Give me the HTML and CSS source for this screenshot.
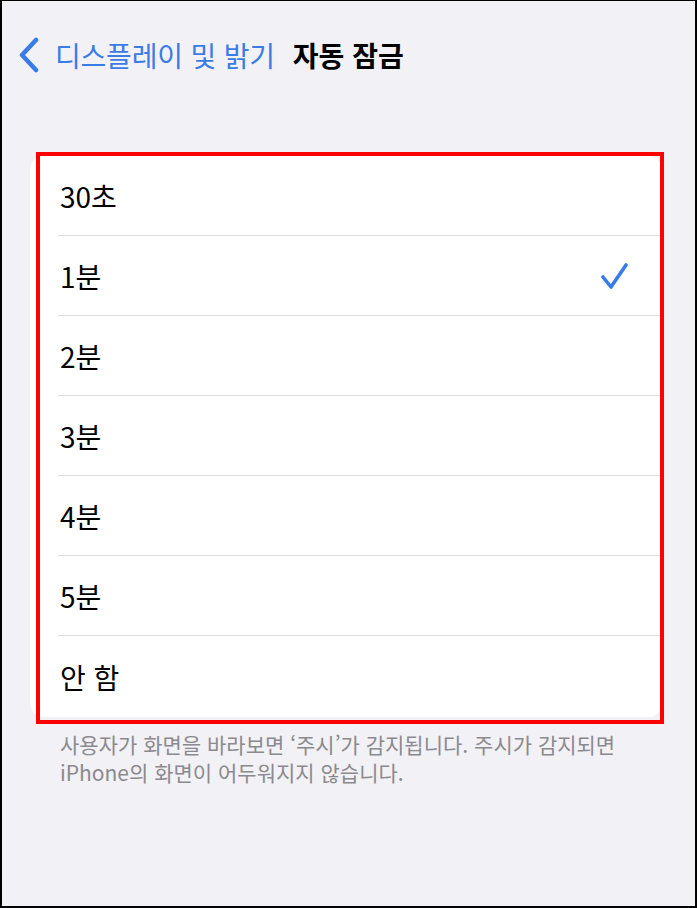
FILE: index.html
```html
<!DOCTYPE html>
<html lang="ko">
<head>
<meta charset="utf-8">
<title>자동 잠금</title>
<link rel="stylesheet" href="styles.css">
</head>
<body>
<div class="screen">
  <header class="nav">
    <svg class="chev" width="22" height="36" viewBox="0 0 22 36" aria-hidden="true">
      <path d="M18 3 L4 18 L18 33" fill="none" stroke="#3a7ce6" stroke-width="4.5" stroke-linecap="round" stroke-linejoin="round"/>
    </svg>
    <span class="back">디스플레이 및 밝기</span>
    <span class="title">자동 잠금</span>
  </header>

  <section class="card">
    <div class="row"><span>30초</span></div>
    <div class="row"><span>1분</span>
      <svg class="check" width="28" height="28" viewBox="0 0 28 28" aria-hidden="true">
        <path d="M3 15 L11 25 L26 3" fill="none" stroke="#3a7ce6" stroke-width="3.6" stroke-linecap="round" stroke-linejoin="round"/>
      </svg>
    </div>
    <div class="row"><span>2분</span></div>
    <div class="row"><span>3분</span></div>
    <div class="row"><span>4분</span></div>
    <div class="row"><span>5분</span></div>
    <div class="row last"><span>안 함</span></div>
    <div class="highlight"></div>
  </section>

  <p class="footnote">사용자가 화면을 바라보면 ‘주시’가 감지됩니다. 주시가 감지되면<br>iPhone의 화면이 어두워지지 않습니다.</p>
</div>
</body>
</html>
```

FILE: styles.css
```css
html, body {
  margin: 0;
  padding: 0;
}

body {
  font-family: "Noto Sans CJK KR", "Noto Sans", sans-serif;
  background: #000;
}

.screen {
  width: 697px;
  height: 908px;
  box-sizing: border-box;
  border: 2px solid #000;
  border-top-width: 1px;
  background: #f2f1f6;
  overflow: hidden;
}

.nav {
  height: 107px;
  display: flex;
  align-items: center;
  padding-left: 16px;
  box-sizing: border-box;
}

.chev {
  display: block;
  margin-right: 15px;
}

.back {
  font-size: 28px;
  letter-spacing: -0.2px;
  color: #3a7ce6;
  margin-right: 18px;
}

.title {
  font-size: 28px;
  font-weight: 700;
  color: #000;
}

.card {
  position: relative;
  margin: 48px 33px 0 28px;
  background: #fff;
  border-radius: 14px;
  padding-left: 28px;
}

.row {
  height: 79px;
  display: flex;
  align-items: center;
  justify-content: space-between;
  border-bottom: 1px solid #dcdce0;
  padding-right: 34px;
  font-size: 28px;
  color: #000;
}

.row span {
  padding-left: 2px;
}

.row.last {
  border-bottom: none;
  height: 81px;
}

.check {
  display: block;
}

.highlight {
  position: absolute;
  left: 6px;
  right: -2px;
  top: -4px;
  bottom: -7px;
  border: 4px solid #ff0000;
}

.footnote {
  margin: 13px 0 0 58px;
  font-size: 21px;
  line-height: 28px;
  color: #8a8a8e;
}
```
